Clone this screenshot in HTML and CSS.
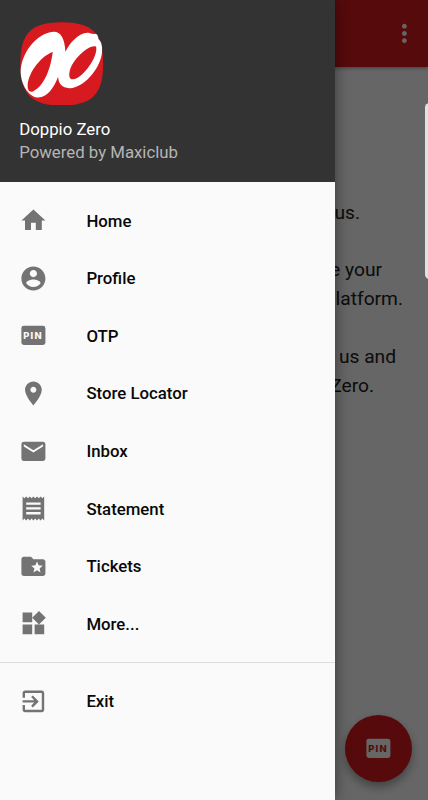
FILE: index.html
```html
<!DOCTYPE html>
<html lang="en">
<head>
  <meta charset="UTF-8">
  <meta name="viewport" content="width=device-width, initial-scale=1.0">
  <title>Doppio Zero</title>
  <link rel="stylesheet" href="styles.css">
</head>
<body>

  <!-- Screen behind the drawer -->
  <div class="screen">
    <div class="appbar">
      <svg class="icon" viewBox="0 0 24 24"><path d="M12 8c1.1 0 2-.9 2-2s-.9-2-2-2-2 .9-2 2 .9 2 2 2zm0 2c-1.1 0-2 .9-2 2s.9 2 2 2 2-.9 2-2-.9-2-2-2zm0 6c-1.1 0-2 .9-2 2s.9 2 2 2 2-.9 2-2-.9-2-2-2z"/></svg>
    </div>
    <div class="welcome">
      <p class="line-intro">us.</p>
      <p class="line-your">e your</p>
      <p class="line-platform">latform.</p>
      <p class="line-and">us and</p>
      <p class="line-zero">Zero.</p>
    </div>
    <button class="fab">
      <svg class="icon" viewBox="0 0 24 24"><rect x="2" y="4" width="20" height="16" rx="2"/><text class="pin" x="3.6" y="15">PIN</text></svg>
    </button>
  </div>
  <div class="scrim"></div>
  <div class="edge-handle"></div>

  <!-- Navigation Drawer -->
  <div class="drawer">
    <div class="drawer-header">
      <svg class="logo" viewBox="32 20 250 250">
        <path fill="#d71a20" d="M157 21C248 21 281 54 281 145S248 270 157 270 33 237 33 145 66 21 157 21z"/>
        <path fill="#fff" fill-rule="evenodd" d="M34 166C36 116 78 54 132 49C153 48 166 67 168 109C181 81 210 50 236 52C244 52 247 58 257 55C264 55 266 64 267 71C276 79 280 95 277 116C270 165 217 221 179 218C159 217 147 206 146 184C134 217 112 248 84 246C57 244 33 204 34 166z
          M130 110C97 121 58 169 55 208C54 225 61 232 72 227C103 212 123 165 130 110z
          M260 94C244 84 186 130 180 172C178 187 183 194 194 191C220 186 266 126 260 94z"/>
      </svg>
      <div class="name">Doppio Zero</div>
      <div class="powered">Powered by Maxiclub</div>
    </div>

    <ul class="menu">
      <li><svg class="icon" viewBox="0 0 24 24"><path d="M10 20v-6h4v6h5v-8h3L12 3 2 12h3v8z"/></svg>Home</li>
      <li><svg class="icon" viewBox="0 0 24 24"><path d="M12 2C6.48 2 2 6.48 2 12s4.48 10 10 10 10-4.48 10-10S17.52 2 12 2zm0 3c1.66 0 3 1.34 3 3s-1.34 3-3 3-3-1.34-3-3 1.34-3 3-3zm0 14.2c-2.5 0-4.71-1.28-6-3.22.03-1.99 4-3.08 6-3.08 1.99 0 5.97 1.09 6 3.08-1.29 1.94-3.5 3.22-6 3.22z"/></svg>Profile</li>
      <li><svg class="icon" viewBox="0 0 24 24"><rect x="2" y="4" width="20" height="16" rx="2"/><text class="pin" x="3.6" y="15">PIN</text></svg>OTP</li>
      <li><svg class="icon" viewBox="0 0 24 24"><path d="M12 2C8.13 2 5 5.13 5 9c0 5.25 7 13 7 13s7-7.75 7-13c0-3.87-3.13-7-7-7zm0 9.5c-1.38 0-2.5-1.12-2.5-2.5s1.12-2.5 2.5-2.5 2.5 1.12 2.5 2.5-1.12 2.5-2.5 2.5z"/></svg>Store Locator</li>
      <li><svg class="icon" viewBox="0 0 24 24"><path d="M20 4H4c-1.1 0-1.99.9-1.99 2L2 18c0 1.1.9 2 2 2h16c1.1 0 2-.9 2-2V6c0-1.1-.9-2-2-2zm0 4l-8 5-8-5V6l8 5 8-5v2z"/></svg>Inbox</li>
      <li><svg class="icon" viewBox="0 0 24 24"><path d="M18 17H6v-2h12v2zm0-4H6v-2h12v2zm0-4H6V7h12v2zM3 22l1.5-1.5L6 22l1.5-1.5L9 22l1.5-1.5L12 22l1.5-1.5L15 22l1.5-1.5L18 22l1.5-1.5L21 22V2l-1.5 1.5L18 2l-1.5 1.5L15 2l-1.5 1.5L12 2l-1.5 1.5L9 2 7.5 3.5 6 2 4.5 3.5 3 2v20z"/></svg>Statement</li>
      <li><svg class="icon" viewBox="0 0 24 24"><path d="M20 6h-8l-2-2H4c-1.1 0-1.99.9-1.99 2L2 18c0 1.1.9 2 2 2h16c1.1 0 2-.9 2-2V8c0-1.1-.9-2-2-2zm-2.06 11L15 15.28 12.06 17l.78-3.33-2.59-2.24 3.41-.29L15 8l1.34 3.14 3.41.29-2.59 2.24.78 3.33z"/></svg>Tickets</li>
      <li><svg class="icon" viewBox="0 0 24 24"><path d="M13 13v8h8v-8h-8zM3 21h8v-8H3v8zM3 3v8h8V3H3zm13.66-1.31L11 7.34 16.66 13l5.66-5.66-5.66-5.65z"/></svg>More...</li>
    </ul>
    <ul class="menu">
      <li><svg class="icon" viewBox="0 0 24 24"><path d="M10.09 15.59L11.5 17l5-5-5-5-1.41 1.41L12.67 11H3v2h9.67l-2.58 2.59zM19 3H5c-1.11 0-2 .9-2 2v4h2V5h14v14H5v-4H3v4c0 1.1.89 2 2 2h14c1.1 0 2-.9 2-2V5c0-1.1-.9-2-2-2z"/></svg>Exit</li>
    </ul>
  </div>

</body>
</html>
```
FILE: styles.css
```css
/* General styles */
* {
  box-sizing: border-box;
}

body {
  margin: 0;
  height: 800px;
  position: relative;
  overflow: hidden;
  font-family: Roboto, sans-serif;
}

.icon {
  width: 28.8px;
  height: 28.8px;
  flex: none;
  display: block;
}

.pin {
  font-family: Inter, sans-serif;
  font-size: 7.8px;
  font-weight: 800;
  letter-spacing: 1px;
}

/* Screen behind the drawer */
.screen {
  height: 800px;
  background-color: #ffffff;
}

.appbar {
  display: flex;
  justify-content: flex-end;
  align-items: center;
  height: 67px;
  padding-right: 9px;
  background-color: #d71a20;
  box-shadow: 0 1px 4px rgba(0,0,0,0.4);
}

.appbar .icon {
  fill: #ffffff;
}

.welcome {
  padding-top: 131.8px;
  font-size: 19.2px;
  line-height: 28.8px;
  text-align: right;
  color: #212121;
}

.welcome p {
  margin: 0;
}

.welcome .line-intro {
  padding-right: 68px;
}

.welcome .line-your {
  margin-top: 28.8px;
  padding-right: 46px;
}

.welcome .line-platform {
  padding-right: 25px;
}

.welcome .line-and {
  margin-top: 28.8px;
  padding-right: 32px;
}

.welcome .line-zero {
  padding-right: 54px;
}

.fab {
  position: absolute;
  right: 16.5px;
  bottom: 18.5px;
  display: flex;
  align-items: center;
  justify-content: center;
  width: 67px;
  height: 67px;
  padding: 0;
  border: none;
  border-radius: 50%;
  background-color: #d71a20;
  box-shadow: 0 5px 10px rgba(0,0,0,0.35);
}

.fab .icon {
  fill: #ffffff;
}

.fab .pin {
  fill: #d71a20;
}

.scrim {
  position: absolute;
  inset: 0;
  background-color: rgba(0,0,0,0.6);
}

.edge-handle {
  position: absolute;
  top: 103px;
  right: -6px;
  width: 9px;
  height: 176px;
  border-radius: 5px;
  background-color: #e2e2e2;
}

/* Navigation drawer */
.drawer {
  position: absolute;
  top: 0;
  left: 0;
  width: 335px;
  height: 800px;
  background-color: #fafafa;
  box-shadow: 0 0 14px rgba(0,0,0,0.45);
}

.drawer-header {
  height: 182px;
  padding: 21.5px 19.2px 0;
  background-color: #333333;
  font-size: 16.8px;
  line-height: 23px;
}

.logo {
  display: block;
  width: 83.5px;
  height: 83.5px;
  margin: 0 0 13px 1.3px;
}

.name {
  color: #ffffff;
}

.powered {
  color: #b5b5b5;
}

.menu {
  list-style-type: none;
  margin: 0;
  padding: 9.8px 0 9.4px;
}

.menu + .menu {
  border-top: 1px solid #dedede;
  padding-top: 9.2px;
}

.menu li {
  display: flex;
  align-items: center;
  gap: 38.4px;
  height: 57.6px;
  padding-left: 19.2px;
  font-size: 16.8px;
  font-weight: 500;
  color: #080808;
}

.menu .icon {
  fill: #737373;
}

.menu .pin {
  fill: #fafafa;
}
```
